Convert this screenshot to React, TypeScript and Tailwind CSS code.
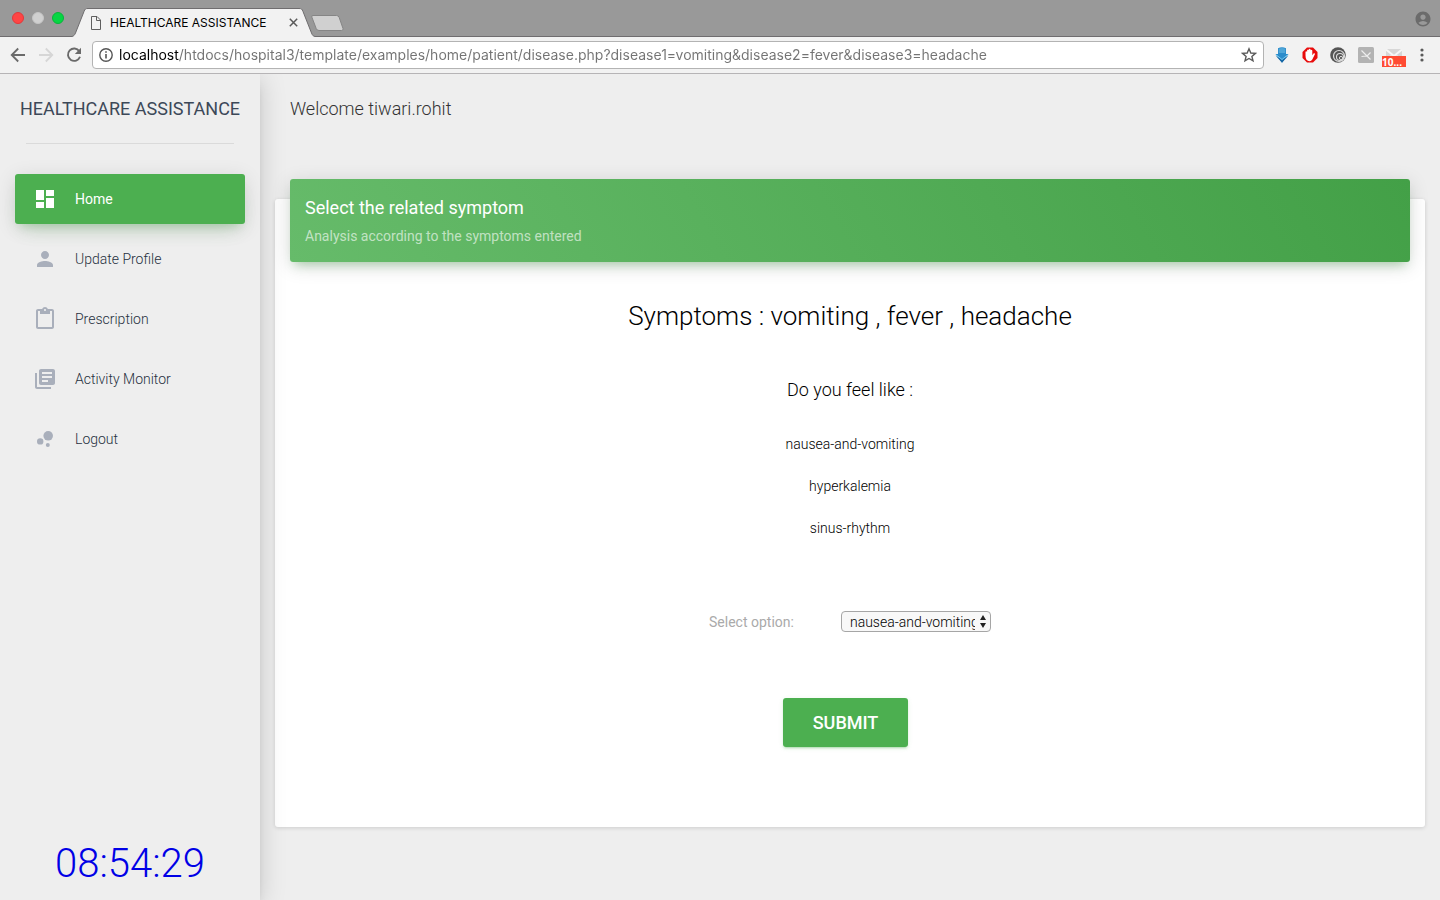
import type { ComponentType, ReactNode } from "react";
import {
  MdAccountCircle,
  MdBubbleChart,
  MdContentPaste,
  MdDashboard,
  MdLibraryBooks,
  MdPerson,
} from "react-icons/md";

type NavItem = { label: string; icon: ComponentType<{ className?: string }>; active?: boolean };

const navItems: NavItem[] = [
  { label: "Home", icon: MdDashboard, active: true },
  { label: "Update Profile", icon: MdPerson },
  { label: "Prescription", icon: MdContentPaste },
  { label: "Activity Monitor", icon: MdLibraryBooks },
  { label: "Logout", icon: MdBubbleChart },
];

const conditions = ["nausea-and-vomiting", "hyperkalemia", "sinus-rhythm"];

function TabStrip() {
  return (
    <div className="flex h-[37px] items-end border-b border-[#6f6d6f] bg-[#999999]">
      <div className="flex h-9 w-[72px] items-center gap-2 pl-3">
        <button aria-label="Close window" className="size-3 rounded-full border border-[#e2383a] bg-[#ff4544]" />
        <button aria-label="Minimize window" className="size-3 rounded-full border border-[#c4c4c4] bg-[#d0d0d0]" />
        <button aria-label="Zoom window" className="size-3 rounded-full border border-[#08b53a] bg-[#06d643]" />
      </div>
      <div className="relative -mb-px flex h-[29px] w-[243px] items-center pl-[18px] pr-[17px]">
        <svg className="absolute inset-0 size-full" viewBox="0 0 243 29" aria-hidden="true">
          <path d="M0 28.5C2 28 2.500 27 3.500 25L12 3.500C13 1 13.500 .5 16 .5H227C229.500 .5 230 1 231 3.500L239.500 25C240.500 27.500 241 28 243 28.500V29H0Z" fill="#f2f2f2" />
          <path d="M0 28.500C2 28 2.500 27 3.500 25L12 3.500C13 1 13.500 .5 16 .5H227C229.500 .5 230 1 231 3.500L239.500 25C240.500 27.500 241 28 243 28.500" fill="none" stroke="#6f6d6f" />
        </svg>
        <svg className="relative h-[14px] w-3" viewBox="0 0 12 14" fill="none" stroke="#5f5f5f" aria-hidden="true">
          <path d="M1.500 .5H7L10.500 4V13.500H1.500ZM6.500 .5V4.500H10.500" />
        </svg>
        <span className="relative ml-2 grow whitespace-nowrap font-[Inter,sans-serif] text-[12px] leading-4 text-black">
          HEALTHCARE ASSISTANCE
        </span>
        <button aria-label="Close tab" className="relative">
          <svg className="size-[9px]" viewBox="0 0 9 9" stroke="#5a5a5a" strokeWidth="1.500">
            <path d="M.8.8 8.200 8.200M8.200.8.8 8.200" />
          </svg>
        </button>
      </div>
      <button aria-label="New tab" className="mb-1 -ml-1">
        <svg className="h-[17px] w-[34px]" viewBox="0 0 34 17">
          <path d="M2 .5H25.500Q27.500 .5 28.200 2.500L32 13.500Q32.700 15.500 30.500 15.500H8Q6 15.500 5.200 13.500L.8 2Q.3 .5 2 .5Z" fill="#d0d0d0" stroke="#858585" />
        </svg>
      </button>
      <button aria-label="Profile" className="mb-2 ml-auto mr-2">
        <MdAccountCircle className="size-[18px] text-[#6b6b6b]" />
      </button>
    </div>
  );
}

function ToolButton({ label, children }: { label: string; children: ReactNode }) {
  return (
    <button aria-label={label} className="flex size-7 shrink-0 items-center justify-center">
      {children}
    </button>
  );
}

function Toolbar() {
  return (
    <div className="flex h-[37px] items-center border-b border-[#b6b4b6] bg-[#f2f2f2] pl-1 pr-1">
      <ToolButton label="Back">
        <svg className="size-4" viewBox="0 0 16 16" fill="none" stroke="#6a6a6a" strokeWidth="1.800">
          <path d="M15 8H2M8.200 1.500 1.700 8l6.500 6.500" />
        </svg>
      </ToolButton>
      <ToolButton label="Forward">
        <svg className="size-4" viewBox="0 0 16 16" fill="none" stroke="#d6d6d6" strokeWidth="1.800">
          <path d="M1 8H14M7.800 1.500 14.300 8l-6.500 6.500" />
        </svg>
      </ToolButton>
      <ToolButton label="Reload">
        <svg className="size-4" viewBox="0 0 16 16" fill="none">
          <path d="M13.300 4.200A6.200 6.200 0 1 0 14 9.800" stroke="#6a6a6a" strokeWidth="1.900" />
          <path d="M15 .8V7H8.800Z" fill="#6a6a6a" />
        </svg>
      </ToolButton>
      <div className="ml-1 flex h-7 grow items-center rounded-[4px] border border-[#b3b3b3] bg-white pl-1.5 pr-1.5">
        <svg className="size-[14px] shrink-0" viewBox="0 0 14 14" aria-hidden="true">
          <circle cx="7" cy="7" r="6.200" fill="none" stroke="#555" strokeWidth="1.400" />
          <path d="M6.200 6h1.600v4.500H6.200ZM6.200 3.300h1.600v1.500H6.200Z" fill="#555" />
        </svg>
        <input
          aria-label="Address"
          className="ml-1.5 h-6 min-w-0 grow bg-[linear-gradient(90deg,#000_60px,#737373_60px)] bg-clip-text pb-0.5 font-[Inter,sans-serif] text-[14px] text-transparent outline-none"
          defaultValue="localhost/htdocs/hospital3/template/examples/home/patient/disease.php?disease1=vomiting&disease2=fever&disease3=headache"
        />
        <button aria-label="Bookmark">
          <svg className="size-4" viewBox="0 0 16 16" fill="none" stroke="#5a5a5a" strokeWidth="1.400">
            <path d="M8 1.800 9.800 6l4.600.4-3.500 3 1.100 4.500L8 11.500l-4 2.400 1.100-4.500-3.500-3L6.200 6Z" />
          </svg>
        </button>
      </div>
      <div className="ml-1 flex">
        <ToolButton label="Downloads">
          <svg className="size-4" viewBox="0 0 16 16">
            <path d="M4 1.200Q8-.8 12 1.200V7h2.500L8 15.800 1.500 7H4Z" fill="#2b8ccb" />
            <path d="M1.500 8.500 8 13l6.500-4.500L8 15.800Z" fill="#1767a5" />
            <path d="M4.800 1.700Q8 .2 11.200 1.700V6H4.800Z" fill="#4fa6d8" />
            <path d="m2.500 8 5.500 4.500L13.500 8" fill="none" stroke="#7fd0f2" strokeWidth=".9" />
          </svg>
        </ToolButton>
        <ToolButton label="Ad blocker">
          <svg className="size-4" viewBox="0 0 16 16">
            <path d="M5 .5h6L15.500 5v6L11 15.500H5L.5 11V5Z" fill="#e80c0c" />
            <path d="M3.500 8.500V4.800q.9-1.200 1.600 0V3.200q1-1.300 1.700 0V2.400q1-1.200 1.800 0v.9q1-1.100 1.700.1v4.800l1.500-1.900q1.400-.4 1.100.9l-2.600 5.400Q9.300 14.200 7.600 14.200 3.500 14.200 3.500 8.500Z" fill="white" />
          </svg>
        </ToolButton>
        <ToolButton label="Proxy">
          <svg className="size-4" viewBox="0 0 16 16" fill="none">
            <circle cx="8" cy="8" r="7.800" fill="#555" />
            <circle cx="9" cy="9" r="5.500" stroke="#ddd" strokeWidth="1.200" />
            <circle cx="10" cy="10" r="3.500" stroke="#ddd" strokeWidth="1.100" />
            <circle cx="11" cy="11" r="1.600" stroke="#ddd" />
          </svg>
        </ToolButton>
        <ToolButton label="Extension">
          <svg className="size-4" viewBox="0 0 16 16" fill="none">
            <rect width="16" height="16" rx="1.500" fill="#b3b3b3" />
            <path d="M3.500 3.500 12.500 12.500M3.500 9.500 9 9M9 9 12.500 5.500" stroke="#eee" strokeWidth="1.200" />
          </svg>
        </ToolButton>
        <div className="relative">
          <ToolButton label="Mail">
            <svg className="size-4" viewBox="0 0 16 16" fill="none">
              <rect y="2" width="16" height="12" fill="#d7d7d7" />
              <path d="M0 2.500 8 9l8-6.500" stroke="#f7f7f7" strokeWidth="2" />
              <path d="M0 13.500 5.500 8M16 13.500 10.500 8" stroke="#f7f7f7" />
            </svg>
          </ToolButton>
          <span className="absolute left-0.5 top-[15px] h-[11px] w-6 bg-[#ff4b33] font-['Open_Sans',sans-serif] text-[10px] font-bold leading-[12px] text-white">
            10...
          </span>
        </div>
        <ToolButton label="Menu">
          <svg className="size-4" viewBox="0 0 16 16" fill="#5a5a5a">
            <circle cx="8" cy="3" r="1.600" />
            <circle cx="8" cy="8" r="1.600" />
            <circle cx="8" cy="13" r="1.600" />
          </svg>
        </ToolButton>
      </div>
    </div>
  );
}

function Sidebar() {
  return (
    <aside className="relative z-10 flex w-[260px] shrink-0 flex-col bg-[#eeeeee] shadow-[0_4px_25px_0_rgba(0,0,0,0.17),0_8px_10px_-5px_rgba(0,0,0,0.2)]">
      <a href="#home" className="pt-5 text-center text-[18px] leading-[30px] text-[#3c4858]">
        HEALTHCARE ASSISTANCE
      </a>
      <hr className="mx-[26px] mt-[19px] border-[#dadada]" />
      <nav className="mt-[30px] flex flex-col gap-2.5 px-[15px]">
        {navItems.map(({ label, icon: Icon, active }) => (
          <a
            key={label}
            href="#"
            className={
              active
                ? "flex h-[50px] items-center rounded-[3px] bg-[#4caf50] pl-[18px] text-[14px] text-white shadow-[0_12px_20px_-10px_rgba(76,175,80,0.28),0_4px_20px_0_rgba(0,0,0,0.12),0_7px_8px_-5px_rgba(76,175,80,0.2)]"
                : "flex h-[50px] items-center rounded-[3px] pl-[18px] text-[14px] font-light text-[#263040]"
            }
          >
            <Icon className={active ? "size-6" : "size-6 text-[#a9afbb]"} />
            <span className="ml-[18px]">{label}</span>
          </a>
        ))}
      </nav>
      <time className="mt-auto pb-[11px] text-center text-[40px] font-light leading-[50px] text-[#0000e6]">
        08:54:29
      </time>
    </aside>
  );
}

function SymptomCard() {
  return (
    <section className="mt-[75px] rounded-[3px] bg-white px-[15px] pb-20 text-center font-light text-black shadow-[0_1px_4px_0_rgba(0,0,0,0.14)]">
      <header className="relative -top-5 -mb-5 h-[83px] rounded-[3px] bg-[linear-gradient(60deg,#66bb6a,#43a047)] p-[15px] text-left font-normal text-white shadow-[0_4px_20px_0_rgba(0,0,0,0.14),0_7px_10px_-5px_rgba(76,175,80,0.4)]">
        <h4 className="text-[18px] leading-[27px]">Select the related symptom</h4>
        <p className="mt-1 text-[14px] leading-[22px] text-white/62">Analysis according to the symptoms entered</p>
      </header>
      <h3 className="mt-[35px] text-[26px] leading-[38px]">Symptoms : vomiting , fever , headache</h3>
      <h4 className="mt-[41px] text-[18px] leading-7">Do you feel like :</h4>
      <ul className="mt-[30px] flex flex-col gap-[22px] text-[14px] leading-5">
        {conditions.map((name) => (
          <li key={name}>{name}</li>
        ))}
      </ul>
      <form className="flex flex-col items-center" onSubmit={(event) => event.preventDefault()}>
        <div className="mt-[73px] flex items-center gap-[47px]">
          <label htmlFor="condition" className="text-[14px] font-normal leading-5 text-[#aaaaaa]">
            Select option:
          </label>
          <div className="relative flex">
            <select
              id="condition"
              className="h-[21px] w-[150px] appearance-none rounded-[4px] border border-[#a6a6a6] bg-[#f8f8f8] pl-2 pr-[15px] text-[14px] leading-[18px] text-black"
            >
              {conditions.map((name) => (
                <option key={name}>{name}</option>
              ))}
            </select>
            <svg className="pointer-events-none absolute right-1 top-1 h-[13px] w-2" viewBox="0 0 8 13" fill="#222" aria-hidden="true">
              <path d="M4 0 7 5H1ZM4 13 1 8H7Z" />
            </svg>
          </div>
        </div>
        <button
          type="submit"
          className="mr-[9px] mt-[66px] h-[49px] w-[125px] rounded-[3px] bg-[#4caf50] text-[18px] font-medium text-white shadow-[0_2px_2px_0_rgba(76,175,80,0.14),0_3px_1px_-2px_rgba(76,175,80,0.2),0_1px_5px_0_rgba(76,175,80,0.12)]"
        >
          SUBMIT
        </button>
      </form>
    </section>
  );
}

export default function App() {
  return (
    <div className="flex min-h-screen flex-col overflow-hidden bg-[#eeeeee] font-[Roboto,sans-serif]">
      <div className="relative z-20">
        <TabStrip />
        <Toolbar />
      </div>
      <div className="flex grow">
        <Sidebar />
        <main className="min-w-0 grow px-[15px] pb-8 pt-5">
          <p className="pl-[15px] text-[18px] font-light leading-[30px] text-[#333333]">Welcome tiwari.rohit</p>
          <SymptomCard />
        </main>
      </div>
    </div>
  );
}
